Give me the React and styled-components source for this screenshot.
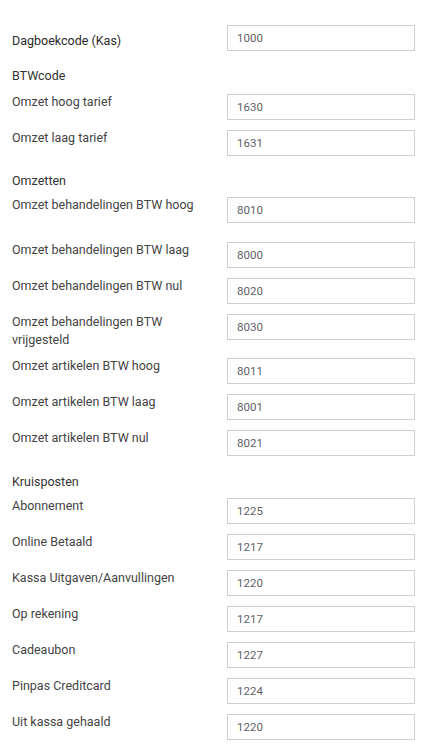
import React from "react";
import styled, { createGlobalStyle } from "styled-components";

const Global = createGlobalStyle`
  html, body { margin: 0; padding: 0; background: #fff; }
  body { font-family: Roboto, "Noto Sans", Arial, sans-serif; }
  * { box-sizing: border-box; }
`;

const Form = styled.form`
  padding: 25px 18px 10px 12px;
  width: 433px;
`;

const Section = styled.div`
  display: flex;
  flex-direction: column;
`;

const Heading = styled.div`
  font-size: 12.5px;
  line-height: 18px;
  color: #333;
  margin: ${(p) => p.$mt}px 0 ${(p) => p.$mb}px;
`;

const Row = styled.div`
  display: grid;
  grid-template-columns: 215px 188px;
  align-items: start;
  min-height: ${(p) => p.$minH || 26}px;
  margin-bottom: 10px;
`;

const Label = styled.label`
  font-size: 12.5px;
  line-height: 17.5px;
  color: ${(p) => (p.$strong ? "#2b2b2b" : "#444")};
  margin-top: ${(p) => (p.$mt !== undefined ? p.$mt : -1)}px;
  padding-right: 10px;
`;

const Input = styled.input`
  width: 188px;
  height: 26px;
  border: 1px solid #cfcfcf;
  border-radius: 0;
  padding: 0 9px;
  font-family: Roboto, "Noto Sans", Arial, sans-serif;
  font-size: 11.5px;
  color: #5f5f66;
  background: #fff;
  outline: none;
`;

const Field = ({ label, value, strong, mt, minH }) => (
  <Row $minH={minH}>
    <Label $strong={strong} $mt={mt}>{label}</Label>
    <Input defaultValue={value} />
  </Row>
);

const btw = [
  ["Omzet hoog tarief", "1630"],
  ["Omzet laag tarief", "1631"],
];

const omzetten = [
  ["Omzet behandelingen BTW hoog", "8010", 35],
  ["Omzet behandelingen BTW laag", "8000"],
  ["Omzet behandelingen BTW nul", "8020"],
  ["Omzet behandelingen BTW vrijgesteld", "8030"],
  ["Omzet artikelen BTW hoog", "8011"],
  ["Omzet artikelen BTW laag", "8001"],
  ["Omzet artikelen BTW nul", "8021"],
];

const kruis = [
  ["Abonnement", "1225"],
  ["Online Betaald", "1217"],
  ["Kassa Uitgaven/Aanvullingen", "1220"],
  ["Op rekening", "1217"],
  ["Cadeaubon", "1227"],
  ["Pinpas Creditcard", "1224"],
  ["Uit kassa gehaald", "1220"],
];

export default function App() {
  return (
    <>
      <Global />
      <Form onSubmit={(e) => e.preventDefault()}>
        <Section>
          <Field label="Dagboekcode (Kas)" value="1000" strong mt={7} />
        </Section>
        <Section>
          <Heading $mt={6} $mb={9}>BTWcode</Heading>
          {btw.map(([l, v]) => (
            <Field key={l} label={l} value={v} />
          ))}
        </Section>
        <Section>
          <Heading $mt={6} $mb={7}>Omzetten</Heading>
          {omzetten.map(([l, v, m]) => (
            <Field key={l} label={l} value={v} minH={m} />
          ))}
        </Section>
        <Section>
          <Heading $mt={7} $mb={7}>Kruisposten</Heading>
          {kruis.map(([l, v]) => (
            <Field key={l} label={l} value={v} />
          ))}
        </Section>
      </Form>
    </>
  );
}
